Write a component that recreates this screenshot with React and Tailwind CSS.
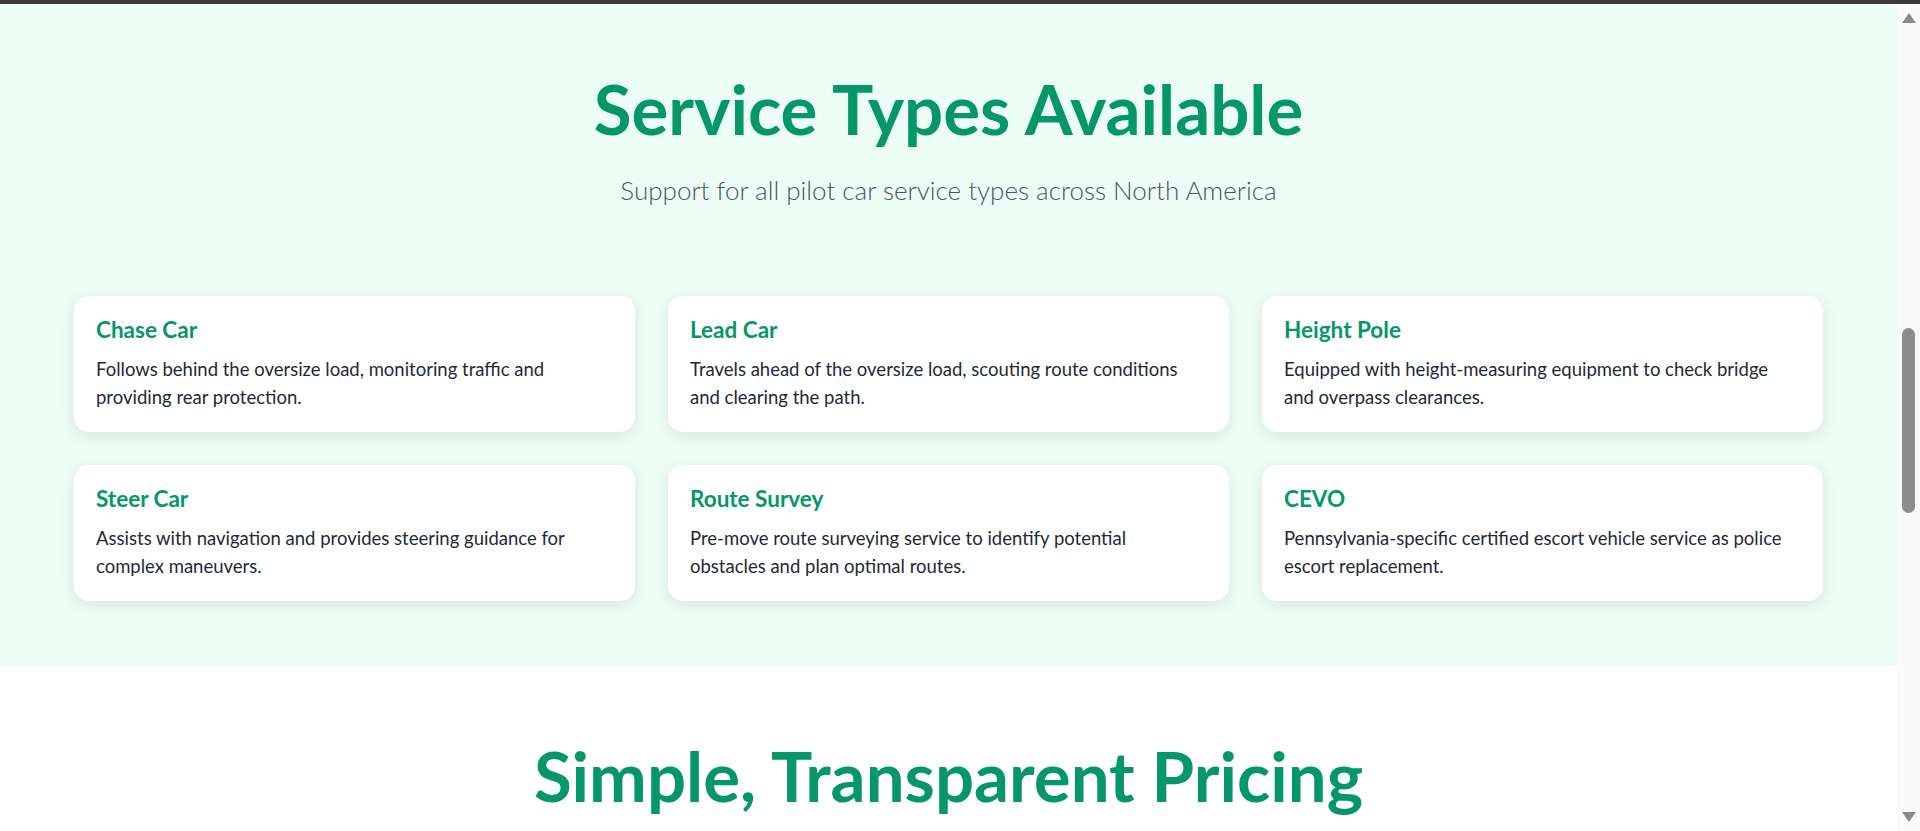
import React from "react";

// line breaks follow the reference layout
const services = [
  {
    title: "Chase Car",
    lines: ["Follows behind the oversize load, monitoring traffic and", "providing rear protection."],
  },
  {
    title: "Lead Car",
    lines: ["Travels ahead of the oversize load, scouting route conditions", "and clearing the path."],
  },
  {
    title: "Height Pole",
    lines: ["Equipped with height-measuring equipment to check bridge", "and overpass clearances."],
  },
  {
    title: "Steer Car",
    lines: ["Assists with navigation and provides steering guidance for", "complex maneuvers."],
  },
  {
    title: "Route Survey",
    lines: ["Pre-move route surveying service to identify potential", "obstacles and plan optimal routes."],
  },
  {
    title: "CEVO",
    lines: ["Pennsylvania-specific certified escort vehicle service as police", "escort replacement."],
  },
];

const ServiceCard = ({ title, lines }) => (
  <div className="bg-white rounded-[15px] shadow-[0_4px_16px_rgba(0,0,0,0.09)] pt-[21px] pb-[21px] px-[22px]">
    <h3 className="text-[22.5px] leading-[26px] font-bold text-[#059669]">{title}</h3>
    <p className="mt-[12px] text-[18.5px] leading-[28px] text-[#1f2937] whitespace-nowrap">
      {lines[0]}
      <br />
      {lines[1]}
    </p>
  </div>
);

const Scrollbar = () => (
  <div className="w-[23px] shrink-0 bg-[#fafafa] flex flex-col items-center">
    <svg width="14" height="10" viewBox="0 0 14 10" className="mt-[9px]">
      <path d="M7 0 L14 10 L0 10 Z" fill="#8a8a8a" />
    </svg>
    <div className="w-[13px] h-[185px] mt-[305px] rounded-full bg-[#8c8c8c]" />
    <div className="flex-1" />
    <svg width="14" height="10" viewBox="0 0 14 10" className="mb-[9px]">
      <path d="M0 0 L14 0 L7 10 Z" fill="#8a8a8a" />
    </svg>
  </div>
);

const App = () => {
  return (
    <div className="h-[831px] w-full overflow-hidden flex flex-col bg-white font-['Lato',sans-serif]">
      <div className="h-[4px] shrink-0 bg-[#3b3b3b]" />
      <div className="flex flex-1 min-h-0">
        <main className="flex-1 min-w-0 overflow-hidden">
          {/* Service types */}
          <section className="bg-[#ecfdf5] pt-[63px] pb-[65px]">
            <h2 className="text-center text-[69px] leading-[83px] font-bold text-[#059669]">
              Service Types Available
            </h2>
            <p className="mt-[24px] text-center text-[26px] leading-[32px] font-light text-[#4b5563]">
              Support for all pilot car service types across North America
            </p>
            <div className="mt-[90px] mx-auto w-[1749px] grid grid-cols-3 gap-[33px]">
              {services.map((s) => (
                <ServiceCard key={s.title} title={s.title} lines={s.lines} />
              ))}
            </div>
          </section>

          {/* Pricing */}
          <section className="bg-white pt-[68px]">
            <h2 className="text-center text-[69px] leading-[83px] font-bold text-[#059669]">
              Simple, Transparent Pricing
            </h2>
          </section>
        </main>
        <Scrollbar />
      </div>
    </div>
  );
};

export default App;
